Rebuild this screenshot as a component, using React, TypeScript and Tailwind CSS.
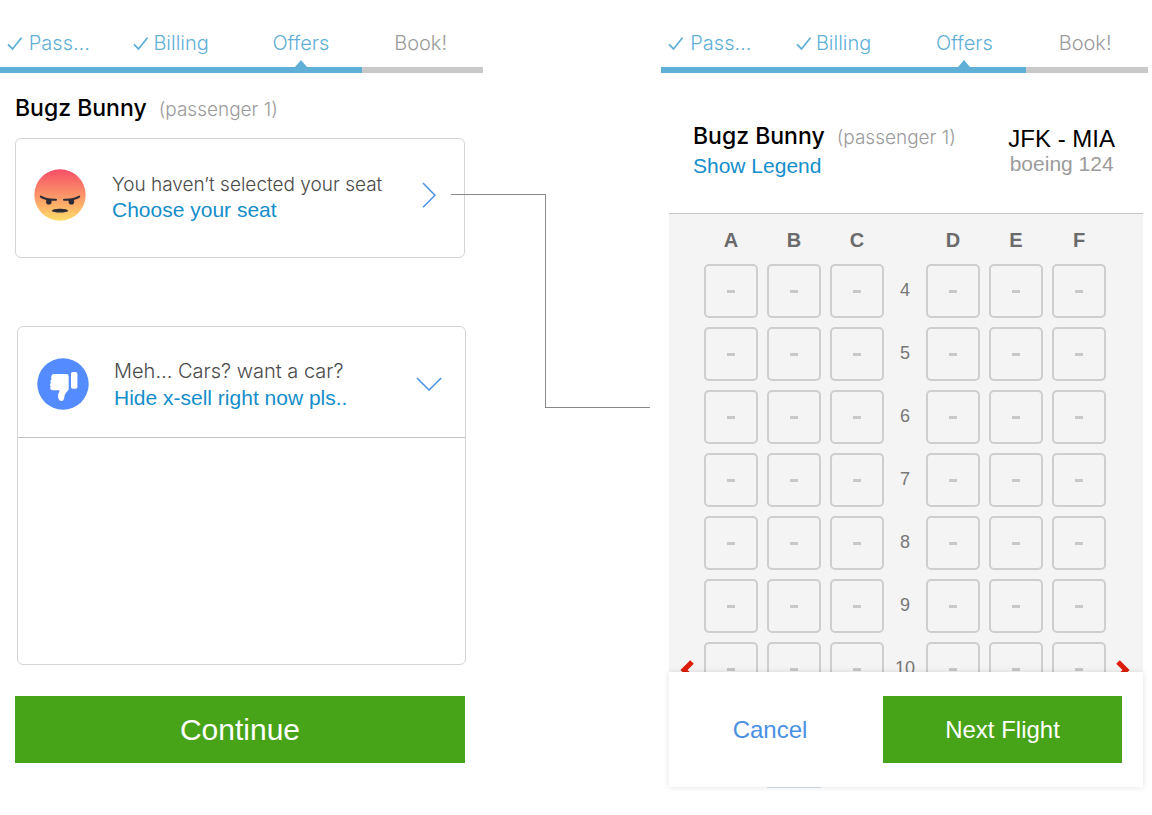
import React from "react";

const columns = ["A", "B", "C", "", "D", "E", "F"];
const rows = [4, 5, 6, 7, 8, 9, 10];

function Check() {
  return (
    <svg className="mt-2 h-4 w-4 shrink-0" viewBox="0 0 16 16" fill="none" stroke="currentColor" strokeWidth="1.8" aria-hidden="true">
      <path d="M1 8.4 L5.5 13 L14.5 1.8" />
    </svg>
  );
}

function Steps() {
  return (
    <nav aria-label="Booking steps" className="pt-7">
      <ol className="grid grid-cols-4 font-['Inter'] text-xl font-light leading-[30px] text-[#5fafd7]">
        <li className="flex h-[39px] justify-center gap-1.5 pr-6">
          <Check />
          <a href="#passengers">Pass…</a>
        </li>
        <li className="flex h-[39px] justify-center gap-1 pr-5">
          <Check />
          <a href="#billing">Billing</a>
        </li>
        <li className="flex h-[39px] flex-col items-center justify-between pr-0.5" aria-current="step">
          <a href="#offers">Offers</a>
          <svg className="h-[7px] w-3" viewBox="0 0 12 7" fill="currentColor" aria-hidden="true">
            <path d="M6 0 L12 7 H0 Z" />
          </svg>
        </li>
        <li className="flex h-[39px] justify-center pr-1 text-[#9b9b9b]">
          <a href="#book">Book!</a>
        </li>
      </ol>
      <div className="flex h-[6px] bg-[#c9c9c9]">
        <div className="w-3/4 bg-[#5fafd7]" />
      </div>
    </nav>
  );
}

function Passenger() {
  return (
    <h2 className="flex items-baseline gap-3 whitespace-nowrap leading-7">
      <span className="font-['Inter'] text-[23px] font-medium text-black">Bugz Bunny</span>
      <span className="font-['Inter'] text-[19px] font-light text-[#9b9b9b]">(passenger 1)</span>
    </h2>
  );
}

function Angry() {
  return (
    <svg className="h-[52px] w-[52px] shrink-0" viewBox="0 0 52 52" aria-hidden="true">
      <defs>
        <linearGradient id="angry" x1="0" y1="0" x2="0" y2="1">
          <stop offset="0" stopColor="#f64e68" />
          <stop offset="0.55" stopColor="#fb9a68" />
          <stop offset="1" stopColor="#ffdc68" />
        </linearGradient>
      </defs>
      <circle cx="26" cy="26" r="25.7" fill="url(#angry)" />
      <g fill="none" stroke="#2b2b38" strokeWidth="2" strokeLinecap="round">
        <path d="M6.8 27.6 C11 30.3 15.5 31 22 30.8" />
        <path d="M45.2 27.6 C41 30.3 36.5 31 30 30.8" />
      </g>
      <circle cx="14.8" cy="32.8" r="2.8" fill="#2b2b38" />
      <circle cx="37.4" cy="32.8" r="2.8" fill="#2b2b38" />
      <path d="M17.6 41.8 C19 38.9 33 38.9 34.4 41.8 C33 44.2 19 44.2 17.6 41.8 Z" fill="#2b2b38" />
    </svg>
  );
}

function ThumbsDown() {
  return (
    <svg className="h-[52px] w-[52px] shrink-0" viewBox="0 0 52 52" aria-hidden="true">
      <circle cx="26" cy="26" r="25.7" fill="#548cff" />
      <path
        fill="#fff"
        d="M17 16 H29.5 Q31.7 16 31.7 18.2 V30.5 C31.7 33 27.8 35 27.5 38 C27.4 41 26.3 43.2 24.3 43 C21.8 42.8 21 40.5 21 38 C21 35.5 22.2 34.2 22.6 32.2 H15.4 C13.3 32.2 12.5 30 13.8 28.6 C12.7 27.5 12.8 25.8 14 25 C13 23.8 13.3 22 14.6 21.2 C13.8 19.8 14.2 16 17 16 Z"
      />
      <rect x="34" y="14" width="6.4" height="16.8" rx="1.8" fill="#fff" />
    </svg>
  );
}

function Connector() {
  return (
    <div className="absolute -left-8 right-[11px] top-[194px] flex h-[214px]" aria-hidden="true">
      <div className="flex-[94] border-r border-t border-[#888888]" />
      <div className="flex-[104] border-b border-[#888888]" />
    </div>
  );
}

function Offers() {
  return (
    <section className="min-w-0">
      <Steps />
      <div className="pl-[15px] pr-[18px] pt-[21px]">
        <Passenger />
        <a href="#seats" className="mt-3.5 flex h-[120px] items-center rounded-md border border-[#d4d4d4] pb-1.5 pl-[18px] pr-7">
          <Angry />
          <span className="ml-[26px] flex-1 whitespace-nowrap pt-1 leading-[25px]">
            <span className="block font-['Inter'] text-[19px] font-light text-[#4a4a4a]">You haven’t selected your seat</span>
            <span className="block text-[21px] text-[#148ecb]">Choose your seat</span>
          </span>
          <svg className="h-[26px] w-[14px]" viewBox="0 0 14 26" fill="none" stroke="#4a90e2" strokeWidth="1.5" aria-hidden="true">
            <path d="M1 1 L13 13.2 L1 25.2" />
          </svg>
        </a>
        <div className="-mr-px ml-0.5 mt-[68px] h-[339px] rounded-md border border-[#d4d4d4]">
          <button type="button" className="flex h-[111px] w-full items-center border-b border-[#c4c4c4] pl-[19px] pr-[23px] pt-1 text-left">
            <ThumbsDown />
            <span className="ml-[25px] flex-1 whitespace-nowrap leading-[26px]">
              <span className="block font-['Inter'] text-xl font-light text-[#4a4a4a]">Meh… Cars? want a car?</span>
              <span className="block text-[21px] text-[#148ecb]">Hide x-sell right now pls..</span>
            </span>
            <svg className="h-[14px] w-[26px]" viewBox="0 0 26 14" fill="none" stroke="#4a90e2" strokeWidth="1.5" aria-hidden="true">
              <path d="M1 1 L13 13 L25.2 1" />
            </svg>
          </button>
        </div>
        <button type="button" className="mt-[31px] h-[67px] w-full bg-[#47a317] text-[30px] text-white">
          Continue
        </button>
      </div>
    </section>
  );
}

function SeatMap() {
  return (
    <div className="h-[459px] overflow-hidden border-t border-[#c4c4c4] bg-[#f4f4f4] pr-0.5 pt-3">
      <div className="mx-auto flex w-[402px] flex-col gap-[9px]">
        <div className="mb-px grid grid-cols-[54px_54px_54px_24px_54px_54px_54px] gap-[9px] text-center text-xl font-bold leading-7 text-[#6b6b6b]">
          {columns.map((c, i) => (
            <span key={i}>{c}</span>
          ))}
        </div>
        {rows.map((row) => (
          <div key={row} className="relative grid grid-cols-[54px_54px_54px_24px_54px_54px_54px] gap-[9px]">
            {columns.map((c, i) =>
              c ? (
                <button
                  key={i}
                  type="button"
                  aria-label={`Seat ${row}${c}`}
                  className="flex h-[54px] items-center justify-center rounded-[5px] border-2 border-[#cecece]"
                >
                  <span className="h-[3px] w-2 bg-[#c8c8c8]" />
                </button>
              ) : (
                <span key={i} className="text-center text-lg leading-[52px] text-[#777777]">
                  {row}
                </span>
              )
            )}
            {row === 10 && (
              <>
                <svg className="absolute -left-6 top-[17px] h-[22px] w-[14px]" viewBox="0 0 14 22" fill="none" stroke="#dd1d06" strokeWidth="5" aria-hidden="true">
                  <path d="M12 3 L4 11 L12 19" />
                </svg>
                <svg className="absolute -right-6 top-[17px] h-[22px] w-[14px]" viewBox="0 0 14 22" fill="none" stroke="#dd1d06" strokeWidth="5" aria-hidden="true">
                  <path d="M2 3 L10 11 L2 19" />
                </svg>
              </>
            )}
          </div>
        ))}
      </div>
    </div>
  );
}

function Seats() {
  return (
    <section className="min-w-0">
      <Steps />
      <div className="pl-2 pr-[5px]">
        <header className="flex h-[140px] justify-between pl-6 pr-7 pt-[49px]">
          <div>
            <Passenger />
            <a href="#legend" className="block pt-px text-[21px] leading-[26px] text-[#148ecb]">
              Show Legend
            </a>
          </div>
          <div className="whitespace-nowrap pt-[3px] text-center">
            <p className="text-2xl leading-7 text-black">JFK - MIA</p>
            <p className="text-[21px] leading-[22px] text-[#9b9b9b]">boeing 124</p>
          </div>
        </header>
        <SeatMap />
        <footer className="relative grid h-[115px] grid-cols-[202fr_239fr] items-center gap-3 bg-white pr-[21px] shadow-[0_0_6px_rgba(0,0,0,0.12)]">
          <button type="button" className="text-2xl text-[#4a90e2]">
            Cancel
          </button>
          <button type="button" className="h-[67px] bg-[#47a317] text-2xl text-white">
            Next Flight
          </button>
        </footer>
        <div className="mx-auto w-[402px] pl-[62px]">
          <div className="relative h-px w-[54px] bg-[#ccd6df]" />
        </div>
      </div>
    </section>
  );
}

export default function App() {
  return (
    <main className="grid min-h-screen grid-cols-[483fr_178fr_487fr] bg-white pr-1 font-['Liberation_Sans',Arial,sans-serif]">
      <Offers />
      <div className="relative">
        <Connector />
      </div>
      <Seats />
    </main>
  );
}
